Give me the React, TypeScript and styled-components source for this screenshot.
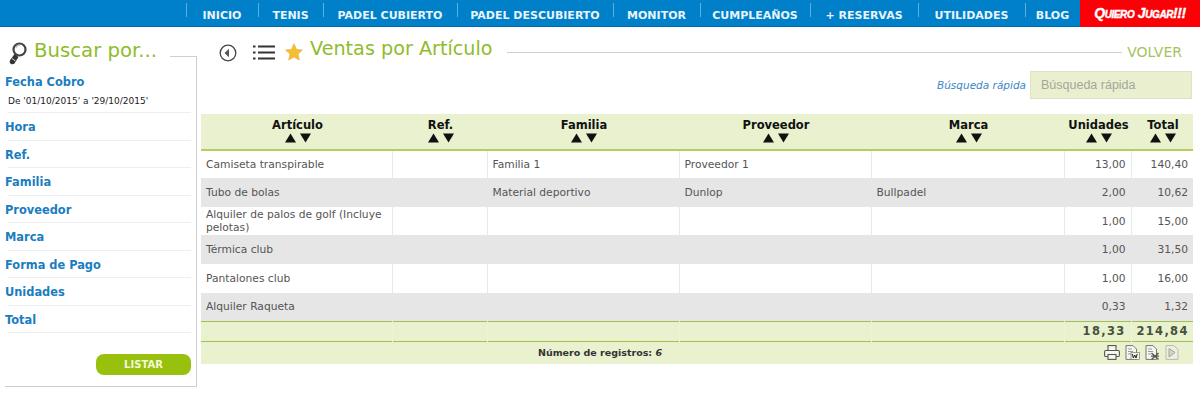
import React from 'react';
import styled, { createGlobalStyle } from 'styled-components';

const GlobalStyle = createGlobalStyle`
  html, body {
    margin: 0;
    padding: 0;
    background: #fff;
    font-family: "DejaVu Sans", Verdana, sans-serif;
  }
`;

const Header = styled.header`
  display: flex;
  justify-content: flex-end;
  height: 26px;
  background: #0080c9;
  border-bottom: 1px solid #0068a4;
`;

const Nav = styled.nav`
  display: flex;
`;

const NavItem = styled.a<{ $w: number }>`
  position: relative;
  width: ${(p) => p.$w}px;
  padding-top: 9px;
  box-sizing: border-box;
  text-align: center;
  color: #e8f4fb;
  font-size: 11px;
  font-weight: bold;
  line-height: 13px;
  white-space: nowrap;

  &::before {
    content: '';
    position: absolute;
    left: 0;
    top: 3px;
    height: 14px;
    width: 1px;
    background: #5fb0de;
  }
`;

const Cta = styled.a`
  width: 120px;
  height: 27px;
  background: #fb0006;
  color: #fff;
  text-align: center;
  font-family: "Liberation Sans", Arial, sans-serif;
  font-size: 14px;
  font-weight: bold;
  font-style: italic;
  font-variant: small-caps;
  line-height: 27px;
  letter-spacing: -0.4px;
  -webkit-text-stroke: 0.4px #fff;
`;

const Body = styled.div`
  display: flex;
  align-items: flex-start;
`;

const Sidebar = styled.aside`
  width: 197px;
  flex: none;
`;

const SideTitleRow = styled.div`
  display: flex;
  height: 31px;
  padding: 12px 0 0 9px;
`;

const SideTitle = styled.h2`
  margin: 0 0 0 7px;
  color: #8fbc2b;
  font-size: 19.7px;
  font-weight: normal;
  line-height: 24px;
  white-space: nowrap;
`;

const SideCorner = styled.div`
  flex: 1;
  margin: 17px 0 0 13px;
  border-top: 1px solid #cfcfcf;
  border-right: 1px solid #cfcfcf;
`;

const SidePanel = styled.div`
  margin-left: 5px;
  height: 317px;
  box-sizing: border-box;
  border-right: 1px solid #cfcfcf;
  border-bottom: 1px solid #cfcfcf;
  padding-right: 5px;
`;

const Filter = styled.div<{ $h: number }>`
  height: ${(p) => p.$h}px;
  box-sizing: border-box;
  margin-left: 3px;
  border-bottom: 1px solid #efefef;
`;

const FilterLabel = styled.div<{ $lh?: number }>`
  margin-left: -3px;
  color: #1b7dc0;
  font-size: 11.4px;
  font-weight: bold;
  line-height: ${(p) => p.$lh ?? 29}px;
`;

const FilterValue = styled.div`
  color: #222;
  font-size: 9px;
  line-height: 12px;
  white-space: nowrap;
`;

const ListButton = styled.button`
  display: block;
  width: 95px;
  height: 21px;
  margin: 21px 0 0 auto;
  padding: 0;
  border: 0;
  border-radius: 8px;
  background: #97c10d;
  color: #f4f9de;
  font-family: "DejaVu Sans", Verdana, sans-serif;
  font-size: 10px;
  font-weight: bold;
`;

const Main = styled.main`
  width: 992px;
  margin-left: 4px;
`;

const TitleBar = styled.div`
  display: flex;
  align-items: flex-start;
  height: 44px;
  padding-top: 11px;
  box-sizing: border-box;
`;

const BackIcon = styled.svg`
  margin: 6px 0 0 18px;
  flex: none;
`;

const ListIcon = styled.svg`
  margin: 7px 0 0 16px;
  flex: none;
`;

const StarIcon = styled.svg`
  margin: 5px 0 0 10px;
  flex: none;
`;

const PageTitle = styled.h1`
  margin: 0 0 0 7px;
  color: #8fbc2b;
  font-size: 19.2px;
  font-weight: normal;
  line-height: 22px;
  white-space: nowrap;
`;

const TitleRule = styled.div`
  flex: 1;
  margin: 14px 5px 0 14px;
  border-top: 1px solid #cfcfcf;
`;

const BackLink = styled.a`
  margin: 7px 11px 0 0;
  color: #a5c25c;
  font-size: 14px;
  line-height: 14px;
`;

const SearchRow = styled.div`
  display: flex;
  justify-content: flex-end;
  align-items: center;
  gap: 4px;
  height: 28px;
  margin: 0 1px 15px 0;
`;

const SearchLabel = styled.label`
  color: #3b87c4;
  font-size: 10.5px;
  font-style: italic;
`;

const SearchInput = styled.input`
  width: 162px;
  height: 28px;
  box-sizing: border-box;
  padding: 0 10px;
  background: #e9efcf;
  border: 1px solid #dde3c4;
  font-family: "Liberation Sans", Arial, sans-serif;
  font-size: 12.5px;

  &::placeholder {
    color: #a3a89a;
    opacity: 1;
  }
`;

const Table = styled.table`
  width: 992px;
  table-layout: fixed;
  border-collapse: collapse;
`;

const Th = styled.th`
  height: 36px;
  padding: 4px 0 0 2px;
  box-sizing: border-box;
  vertical-align: top;
  background: #e9f1cf;
  border-bottom: 2px solid #b6cd63;
  color: #111;
  font-size: 11.5px;
  font-weight: bold;
  line-height: 14px;
`;

const Arrows = styled.svg`
  display: block;
  margin: 1px auto 0;
`;

const Row = styled.tr<{ $alt: boolean; $h: number }>`
  height: ${(p) => p.$h}px;
  background: ${(p) => (p.$alt ? '#e6e6e6' : '#fff')};
`;

const Td = styled.td<{ $right?: boolean; $alt: boolean }>`
  padding: 0 5px;
  border-left: 1px solid ${(p) => (p.$alt ? '#e6e6e6' : '#e9e9e9')};
  color: #555;
  font-size: 10.7px;
  line-height: 13px;
  text-align: ${(p) => (p.$right ? 'right' : 'left')};

  &:first-child {
    border-left: 0;
  }
`;

const TotalRow = styled.tr`
  height: 20px;
  background: #e9f1cf;
  border-top: 1px solid #a0c24a;
  border-bottom: 1px solid #a0c24a;
`;

const TotalTd = styled.td`
  padding: 0 5px;
  border-left: 1px solid #edf3d8;
  color: #45533a;
  font-size: 11.5px;
  font-weight: bold;
  letter-spacing: 1.3px;
  text-align: right;

  &:first-child {
    border-left: 0;
  }
`;

const FooterBar = styled.div`
  display: flex;
  align-items: center;
  justify-content: center;
  position: relative;
  height: 22px;
  padding-right: 194px;
  box-sizing: border-box;
  background: #e9f1cf;
  color: #333;
  font-size: 9.5px;
  font-weight: bold;
`;

const Count = styled.span`
  em {
    font-style: italic;
  }
`;

const Tools = styled.div`
  position: absolute;
  left: 903px;
  top: 3px;
  display: flex;
  gap: 5px;
`;

const widths = [191, 95, 192, 192, 193, 67, 62];
const heads = ['Artículo', 'Ref.', 'Familia', 'Proveedor', 'Marca', 'Unidades', 'Total'];

const rows = [
  { h: 28, cells: ['Camiseta transpirable', '', 'Familia 1', 'Proveedor 1', '', '13,00', '140,40'] },
  { h: 29, cells: ['Tubo de bolas', '', 'Material deportivo', 'Dunlop', 'Bullpadel', '2,00', '10,62'] },
  { h: 28, cells: ['Alquiler de palos de golf (Incluye pelotas)', '', '', '', '', '1,00', '15,00'] },
  { h: 29, cells: ['Térmica club', '', '', '', '', '1,00', '31,50'] },
  { h: 29, cells: ['Pantalones club', '', '', '', '', '1,00', '16,00'] },
  { h: 28, cells: ['Alquiler Raqueta', '', '', '', '', '0,33', '1,32'] },
];

const navItems: [string, number][] = [
  ['INICIO', 72],
  ['TENIS', 65],
  ['PADEL CUBIERTO', 134],
  ['PADEL DESCUBIERTO', 156],
  ['MONITOR', 87],
  ['CUMPLEAÑOS', 110],
  ['+ RESERVAS', 108],
  ['UTILIDADES', 107],
  ['BLOG', 55],
];

const filters: [string, number][] = [
  ['Hora', 28],
  ['Ref.', 27],
  ['Familia', 28],
  ['Proveedor', 27],
  ['Marca', 28],
  ['Forma de Pago', 27],
  ['Unidades', 28],
  ['Total', 27],
];

function SortArrows() {
  return (
    <Arrows width="26" height="10" viewBox="0 0 26 10">
      <polygon points="5.5,0.5 11,9.5 0,9.5" fill="#111" />
      <polygon points="15,0.5 26,0.5 20.5,9.5" fill="#111" />
    </Arrows>
  );
}

function Lens() {
  return (
    <svg width="18" height="23" viewBox="0 0 18 23" style={{ flex: 'none', marginTop: 3 }}>
      <circle cx="10.5" cy="7.5" r="6" fill="#fff" stroke="#444" strokeWidth="2.2" />
      <path d="M7 5.5a4.5 4.5 0 0 1 4-2.5" fill="none" stroke="#aaa" strokeWidth="1.2" />
      <path d="M5.5 12l4 3-4 6.5q-2 1.5-3.8 0.2t-0.5-3.7z" fill="#333" />
      <path d="M3 16.5l3.5 2.5" stroke="#ddd" strokeWidth="1" />
    </svg>
  );
}

function Printer() {
  return (
    <svg width="16" height="15" viewBox="0 0 16 15">
      <g fill="#f7f9ee" stroke="#555" strokeWidth="1.1">
        <rect x="4" y="0.6" width="8" height="5" />
        <rect x="0.6" y="5.5" width="14.8" height="6" rx="1.2" />
        <rect x="4" y="9.5" width="8" height="4.9" />
      </g>
    </svg>
  );
}

function WordIcon() {
  return (
    <svg width="15" height="15" viewBox="0 0 15 15">
      <path d="M1 0.6h7l3.5 3.5v10.3H1z" fill="#f6f6f0" stroke="#777" />
      <path d="M3 4h4M3 6.5h5M3 9h3" stroke="#999" />
      <rect x="6" y="7.5" width="8.5" height="7" fill="#f2f2e4" stroke="#666" strokeWidth="0.6" />
      <path d="M7.2 9l1.2 4 1.3-3 1.3 3 1.2-4" fill="none" stroke="#222" strokeWidth="1" />
    </svg>
  );
}

function SheetIcon() {
  return (
    <svg width="15" height="15" viewBox="0 0 15 15">
      <path d="M1 0.6h7l3.5 3.5v10.3H1z" fill="#f6f6f0" stroke="#777" />
      <path d="M3 4h4M3 6.5h5M3 9h3" stroke="#999" />
      <path d="M6.5 8l7 6.5M13.5 8l-7 6.5M6 11.2h8" stroke="#555" strokeWidth="1.3" />
    </svg>
  );
}

function PdfIcon() {
  return (
    <svg width="14" height="15" viewBox="0 0 14 15">
      <path d="M1 0.6h8l4 4v9.8H1z" fill="#eeefe2" stroke="#b9bbaa" />
      <path d="M4 3.5l6 4-6 4.5z" fill="#d5d7c6" stroke="#a3a596" />
    </svg>
  );
}

export default function App() {
  return (
    <>
      <GlobalStyle />
      <Header>
        <Nav>
          {navItems.map(([label, w]) => (
            <NavItem key={label} $w={w}>
              {label}
            </NavItem>
          ))}
        </Nav>
        <Cta>Quiero Jugar!!!</Cta>
      </Header>
      <Body>
        <Sidebar>
          <SideTitleRow>
            <Lens />
            <SideTitle>Buscar por...</SideTitle>
            <SideCorner />
          </SideTitleRow>
          <SidePanel>
            <Filter $h={43}>
              <FilterLabel $lh={25}>Fecha Cobro</FilterLabel>
              <FilterValue>De '01/10/2015' a '29/10/2015'</FilterValue>
            </Filter>
            {filters.map(([label, h]) => (
              <Filter key={label} $h={h}>
                <FilterLabel>{label}</FilterLabel>
              </Filter>
            ))}
            <ListButton>LISTAR</ListButton>
          </SidePanel>
        </Sidebar>
        <Main>
          <TitleBar>
            <BackIcon width="18" height="18" viewBox="0 0 18 18">
              <circle cx="9" cy="9" r="7.8" fill="none" stroke="#444" strokeWidth="1.3" />
              <polygon points="5.5,9 10,4.8 10,13.2" fill="#555" />
            </BackIcon>
            <ListIcon width="22" height="15" viewBox="0 0 22 15">
              <path d="M5 1.5h17M5 7.5h17M5 13.5h17" stroke="#333" strokeWidth="1.8" />
              <path d="M0 1.5h2.5M0 7.5h2.5M0 13.5h2.5" stroke="#333" strokeWidth="1.8" />
            </ListIcon>
            <StarIcon width="18" height="18" viewBox="0 0 18 18">
              <polygon
                points="9,0.8 11.5,6.4 17.4,7 13,11.1 14.3,17 9,14 3.7,17 5,11.1 0.6,7 6.5,6.4"
                fill="#f5c02c"
                stroke="#e7b45a"
                strokeWidth="0.8"
              />
            </StarIcon>
            <PageTitle>Ventas por Artículo</PageTitle>
            <TitleRule />
            <BackLink>VOLVER</BackLink>
          </TitleBar>
          <SearchRow>
            <SearchLabel>Búsqueda rápida</SearchLabel>
            <SearchInput placeholder="Búsqueda rápida" />
          </SearchRow>
          <Table>
            <colgroup>
              {widths.map((w, i) => (
                <col key={i} width={w} />
              ))}
            </colgroup>
            <thead>
              <tr>
                {heads.map((h) => (
                  <Th key={h}>
                    {h}
                    <SortArrows />
                  </Th>
                ))}
              </tr>
            </thead>
            <tbody>
              {rows.map((row, i) => (
                <Row key={i} $alt={i % 2 === 1} $h={row.h}>
                  {row.cells.map((c, j) => (
                    <Td key={j} $right={j > 4} $alt={i % 2 === 1}>
                      {c}
                    </Td>
                  ))}
                </Row>
              ))}
              <TotalRow>
                {['', '', '', '', '', '18,33', '214,84'].map((c, j) => (
                  <TotalTd key={j}>{c}</TotalTd>
                ))}
              </TotalRow>
            </tbody>
          </Table>
          <FooterBar>
            <Count>
              Número de registros: <em>6</em>
            </Count>
            <Tools>
              <Printer />
              <WordIcon />
              <SheetIcon />
              <PdfIcon />
            </Tools>
          </FooterBar>
        </Main>
      </Body>
    </>
  );
}
